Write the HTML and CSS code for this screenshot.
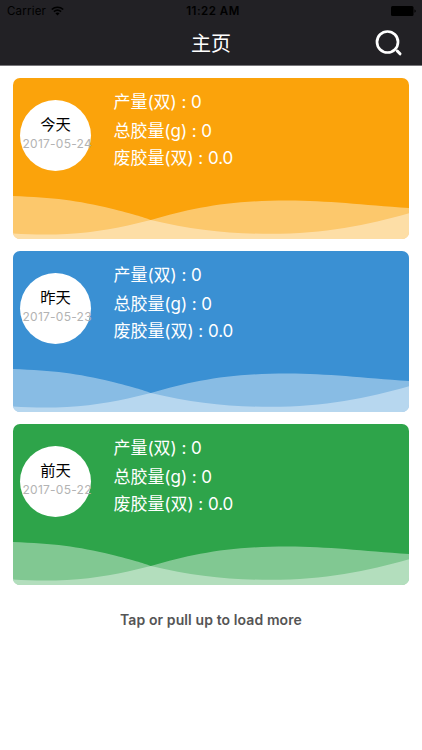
FILE: index.html
```html
<!DOCTYPE html>
<html lang="zh-CN">
<head>
    <meta charset="utf-8">
    <meta name="viewport" content="width=device-width, initial-scale=1">
    <title>主页</title>
    <link rel="stylesheet" href="styles.css">
</head>
<body>
    <svg class="defs" width="0" height="0">
        <symbol id="waves" viewBox="0 0 397 43" preserveAspectRatio="none">
            <path d="M0 0 C40 1.500 65 4.500 98 12.500 C120 18 130 21 138 24 C180 34 215 37.800 258 37.800 C312 37.500 355 29 397 17 V43 H0Z"/>
            <path d="M0 37.500 C45 40.500 82 37 115 29.500 L138 24 C180 12 215 4.500 275 4.500 C315 4.500 350 9 397 12 V43 H0Z"/>
        </symbol>
    </svg>

    <header class="header">
        <div class="status-bar">
            <div class="carrier">
                <span>Carrier</span>
                <svg class="wifi" viewBox="0 0 13 10">
                    <path d="M0.800 3.500 C4 0.500 9 0.500 12.200 3.500" stroke-width="1.700"/>
                    <path d="M2.900 5.700 C5 3.800 8 3.800 10.100 5.700" stroke-width="1.600"/>
                    <path class="dot" d="M4.400 7.300 Q6.500 5.600 8.600 7.300 L6.500 9.500Z"/>
                </svg>
            </div>
            <div class="time">11:22 AM</div>
            <svg class="battery" viewBox="0 0 26 10">
                <rect x="0" y="0" width="22.500" height="10" rx="1.500"/>
                <path d="M23.500 3.200 Q26 5 23.500 6.800Z"/>
            </svg>
        </div>
        <div class="nav-bar">
            <h1>主页</h1>
            <svg class="search" viewBox="0 0 28 28">
                <circle cx="12.500" cy="13" r="10.500" stroke-width="2.700"/>
                <path class="handle" d="M22.300 22 L25 24.800" stroke-width="3"/>
            </svg>
        </div>
    </header>

    <main class="list">
        <section class="card today">
            <div class="day">
                <div class="name">今天</div>
                <div class="date">2017-05-24</div>
            </div>
            <ul class="stats">
                <li>产量(双) : 0</li>
                <li>总胶量(g) : 0</li>
                <li>废胶量(双) : 0.0</li>
            </ul>
            <svg class="wave"><use href="#waves"/></svg>
        </section>

        <section class="card yesterday">
            <div class="day">
                <div class="name">昨天</div>
                <div class="date">2017-05-23</div>
            </div>
            <ul class="stats">
                <li>产量(双) : 0</li>
                <li>总胶量(g) : 0</li>
                <li>废胶量(双) : 0.0</li>
            </ul>
            <svg class="wave"><use href="#waves"/></svg>
        </section>

        <section class="card before">
            <div class="day">
                <div class="name">前天</div>
                <div class="date">2017-05-22</div>
            </div>
            <ul class="stats">
                <li>产量(双) : 0</li>
                <li>总胶量(g) : 0</li>
                <li>废胶量(双) : 0.0</li>
            </ul>
            <svg class="wave"><use href="#waves"/></svg>
        </section>
    </main>

    <div class="load-more">Tap or pull up to load more</div>
</body>
</html>
```

FILE: styles.css
```css
* {
    box-sizing: border-box;
}

body {
    margin: 0;
    background: #fff;
    font-family: Inter, "Noto Sans CJK SC", sans-serif;
}

.defs {
    display: block;
}

/* header */
.header {
    height: 66px;
    background: #222125;
    border-bottom: 1px solid #77767a;
}

.status-bar {
    display: grid;
    grid-template-columns: 1fr auto 1fr;
    align-items: center;
    height: 22px;
    padding: 0 5px 0 7px;
    font-size: 11.5px;
    color: #000;
}

.carrier {
    display: flex;
    align-items: center;
    gap: 5px;
    letter-spacing: 0.2px;
}

.wifi {
    width: 13px;
    height: 10px;
    fill: none;
    stroke: #000;
}

.wifi .dot {
    fill: #000;
    stroke: none;
}

.time {
    padding-left: 2px;
    font-weight: 600;
    letter-spacing: 0.5px;
}

.battery {
    justify-self: end;
    width: 26px;
    height: 10px;
}

.nav-bar {
    display: grid;
    grid-template-columns: 1fr auto 1fr;
    align-items: center;
    height: 43px;
    padding-right: 19px;
    padding-left: 19px;
}

.nav-bar h1 {
    grid-column: 2;
    margin: 0;
    font-size: 20px;
    line-height: 40px;
    font-weight: 400;
    color: #fff;
}

.search {
    justify-self: end;
    width: 28px;
    height: 28px;
    margin-bottom: 2px;
    fill: none;
    stroke: #fff;
}

.search .handle {
    stroke-linecap: round;
}

/* cards */
.list {
    display: flex;
    flex-direction: column;
    gap: 12px;
    padding: 11.5px 13px 0 12.5px;
}

.card {
    display: grid;
    grid-template-columns: 71px 1fr;
    grid-template-rows: 118px 43px;
    column-gap: 23px;
    height: 161px;
    border-radius: 7px;
    overflow: hidden;
}

.today {
    background: #fba30b;
}

.yesterday {
    background: #3a90d3;
}

.before {
    background: #2ea44a;
}

.day {
    width: 71px;
    height: 71px;
    margin: 22.5px 0 0 7px;
    padding: 14px 0 0 3px;
    border-radius: 50%;
    background: #fff;
    white-space: nowrap;
}

.name {
    padding-right: 2px;
    font-size: 15.3px;
    line-height: 22px;
    text-align: center;
    color: #000;
}

.date {
    font-size: 12px;
    line-height: 16px;
    letter-spacing: 0.25px;
    color: #b3b3b3;
}

.stats {
    margin: 0;
    padding: 10px 0 0 7px;
    list-style: none;
    font-size: 17px;
    line-height: 28px;
    letter-spacing: -0.05px;
    font-feature-settings: "calt" 0;
    color: #fff;
}

.stats li:nth-child(2) {
    padding-top: 1px;
    margin-bottom: -1px;
}

.wave {
    grid-column: 1 / 3;
    width: 100%;
    height: 43px;
    fill: #fff;
    fill-opacity: 0.4;
}

.load-more {
    margin-top: 25px;
    font-size: 14px;
    line-height: 20px;
    font-weight: 600;
    letter-spacing: 0.1px;
    text-align: center;
    color: #555;
}
```
